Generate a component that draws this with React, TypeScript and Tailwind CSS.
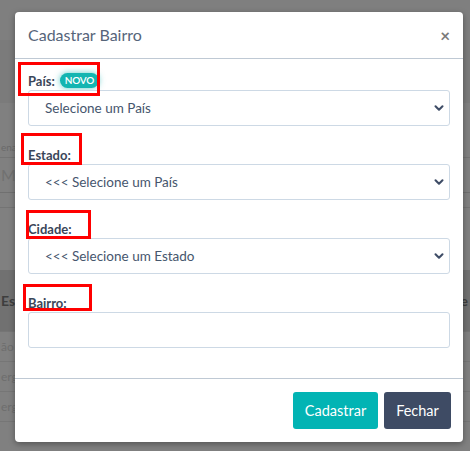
import { ChevronDown } from "lucide-react";

const font = { fontFamily: "Lato, 'Noto Sans', sans-serif" };

function Field({ label, placeholder, badge }: { label: string; placeholder?: string; badge?: boolean }) {
  return (
    <div className="flex flex-col">
      <div className="flex h-[18px] items-center gap-[5px] pt-[1px]">
        <span className="text-[13px] font-bold text-[#3a4659]">{label}</span>
        {badge && (
          <span className="mt-[-3px] flex h-[15px] items-center rounded-full bg-[#13b5b1] px-[5px] text-[10px] font-semibold tracking-tight text-white shadow-[0_0_6px_rgba(19,181,177,0.7)]">
            NOVO
          </span>
        )}
      </div>
      {placeholder !== undefined ? (
        <div className="flex h-[36px] items-center justify-between rounded-[3px] border border-[#cdd9e5] bg-white pl-[16px] pr-[3px]">
          <span className="text-[13.5px] text-[#46566d]">{placeholder}</span>
          <ChevronDown className="h-[14px] w-[14px] text-[#3e4c66]" strokeWidth={3.5} />
        </div>
      ) : (
        <div className="h-[36px] rounded-[3px] border border-[#cdd9e5] bg-white" />
      )}
    </div>
  );
}

function Backdrop() {
  return (
    <div className="flex h-[451px] w-[470px] flex-col overflow-hidden bg-[#808080]" style={font}>
      <div className="h-[40px] bg-[#7f7f7f]" />
      <div className="h-[63px] bg-[#7b7b7b]" />
      <div className="flex h-[55px] items-end border-b border-[#747474] pb-[2px] text-[10px] text-[#6a6a6a]">
        <span className="ml-[1px]">enação</span>
      </div>
      <div className="flex h-[35px] items-center border-b border-[#707070] text-[16px] text-[#717171]">
        <span className="ml-[1px]">Maior</span>
      </div>
      <div className="h-[15px] border-b border-[#747474]" />
      <div className="h-[62px]" />
      <div className="flex h-[62px] items-center justify-between border-b border-[#757575] bg-[#717171] text-[14px] font-bold text-[#3e3e3e]">
        <span className="ml-[1px]">Estado</span>
        <span className="mr-[2px]">ve</span>
      </div>
      {["ão Paulo", "ergipe", "ergipe"].map((t, i) => (
        <div key={i} className="flex h-[30px] items-center border-b border-[#767676] text-[12px] text-[#6e6e6e]">
          <span className="ml-[1px]">{t}</span>
        </div>
      ))}
    </div>
  );
}

export default function App() {
  return (
    <div className="relative h-[451px] w-[470px] overflow-hidden">
      <Backdrop />

      <div
        className="absolute left-[15px] top-[12px] flex h-[430px] w-[448px] flex-col rounded-[4px] bg-white shadow-[0_2px_6px_rgba(0,0,0,0.35)]"
        style={font}
      >
        {/* Header */}
        <div className="flex h-[47px] shrink-0 items-center justify-between border-b border-[#bfc9d4] pl-[13px] pr-[13px]">
          <span className="text-[16px] text-[#56657a]">Cadastrar Bairro</span>
          <span className="text-[17px] font-bold leading-none text-[#7a7a7a]">×</span>
        </div>

        {/* Body */}
        <div className="flex flex-1 flex-col gap-[20px] px-[13px] pt-[13px]">
          <Field label="País:" badge placeholder="Selecione um País" />
          <Field label="Estado:" placeholder="<<< Selecione um País" />
          <Field label="Cidade:" placeholder="<<< Selecione um Estado" />
          <Field label="Bairro:" />
        </div>

        {/* Footer */}
        <div className="flex h-[64px] shrink-0 items-center justify-end gap-[6px] border-t border-[#bfc9d4] pr-[12px]">
          <button className="h-[37px] w-[85px] rounded-[3px] bg-[#02b4b4] text-[14.5px] text-white">Cadastrar</button>
          <button className="h-[37px] w-[67px] rounded-[3px] bg-[#3e4b64] text-[14.5px] text-white">Fechar</button>
        </div>

        {/* Red annotation boxes */}
        <div className="pointer-events-none absolute left-[3px] top-[50px] h-[34px] w-[82px] border-[3px] border-[#ff0000]" />
        <div className="pointer-events-none absolute left-[6px] top-[121px] h-[32px] w-[61px] border-[3px] border-[#ff0000]" />
        <div className="pointer-events-none absolute left-[11px] top-[198px] h-[29px] w-[65px] border-[3px] border-[#ff0000]" />
        <div className="pointer-events-none absolute left-[8px] top-[272px] h-[27px] w-[69px] border-[3px] border-[#ff0000]" />
      </div>
    </div>
  );
}
